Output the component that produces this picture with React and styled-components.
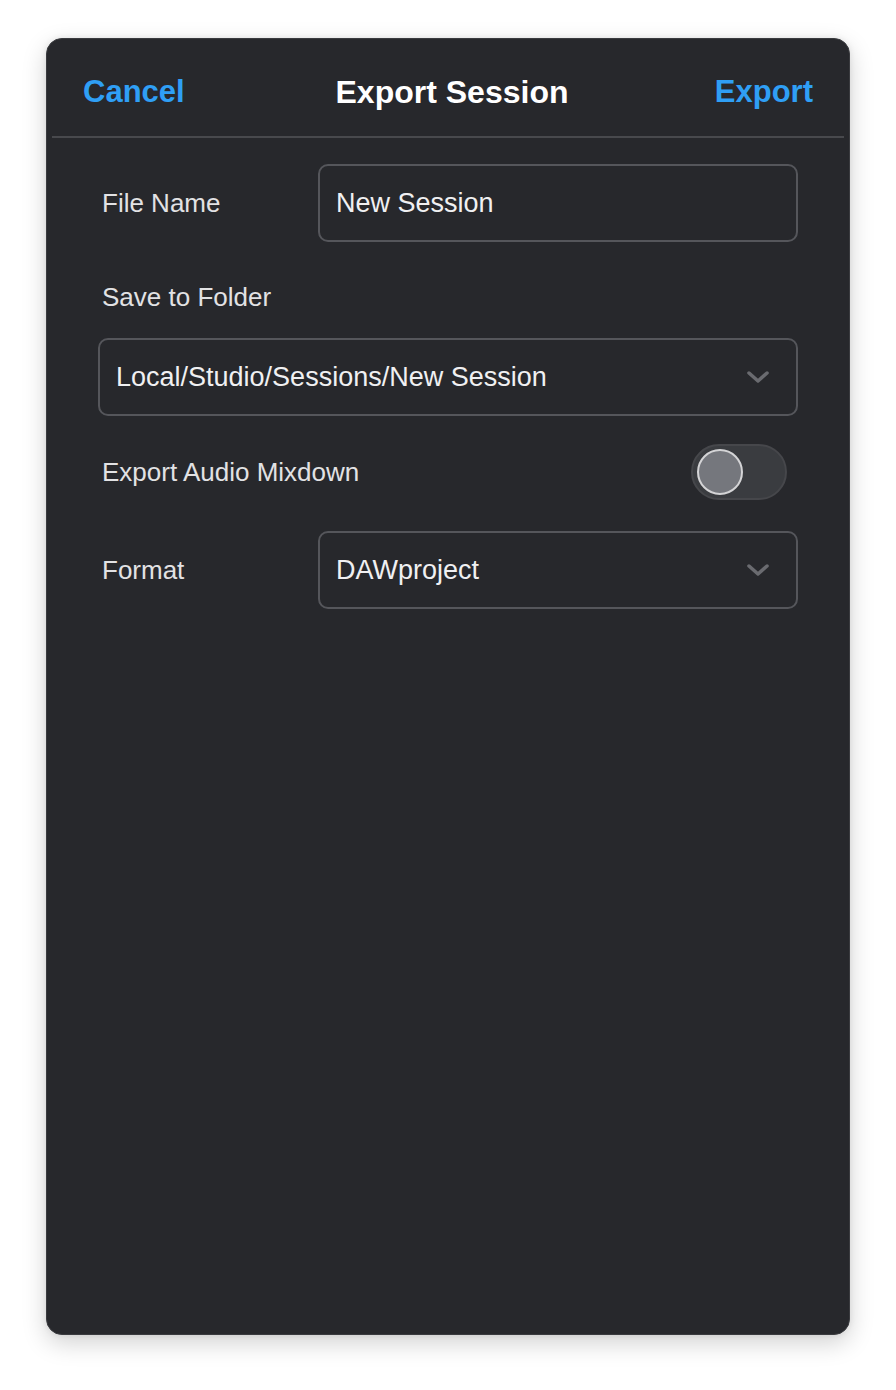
import React from 'react';
import styled, { createGlobalStyle } from 'styled-components';

const GlobalStyle = createGlobalStyle`
  body {
    margin: 0;
    background: #ffffff;
    font-family: "Liberation Sans", Arial, sans-serif;
  }
`;

const Page = styled.div`
  padding: 38px 46px 55px 46px;
`;

const Panel = styled.div`
  width: 804px;
  height: 1297px;
  box-sizing: border-box;
  background: #27282c;
  border: 1px solid #3a3b3f;
  border-radius: 16px;
  box-shadow: 0 8px 24px rgba(0, 0, 0, 0.18), 0 0 6px rgba(0, 0, 0, 0.08);
  display: flex;
  flex-direction: column;
`;

const Header = styled.div`
  height: 99px;
  box-sizing: border-box;
  display: grid;
  grid-template-columns: 1fr auto 1fr;
  align-items: center;
  padding: 9px 31px 0 31px;
  margin: 0 5px;
  border-bottom: 2px solid #48494d;
`;

const NavButton = styled.button`
  background: none;
  border: none;
  padding: 0;
  font-family: inherit;
  font-size: 31px;
  font-weight: 700;
  color: #2f9ff5;
  justify-self: ${(p) => (p.$right ? 'end' : 'start')};
  cursor: pointer;
`;

const Title = styled.h1`
  margin: 0 0 0 8px;
  font-size: 32px;
  font-weight: 700;
  color: #ffffff;
`;

const Form = styled.div`
  display: flex;
  flex-direction: column;
  padding: 26px 51px 0 51px;
`;

const Row = styled.div`
  display: grid;
  grid-template-columns: 220px 1fr;
  align-items: center;
  margin-bottom: ${(p) => p.$gap || 0}px;
`;

const Label = styled.div`
  padding-left: 4px;
  font-size: 26px;
  line-height: 30px;
  color: #e2e2e4;
  margin-bottom: ${(p) => p.$gap || 0}px;
`;

const Field = styled.div`
  height: 78px;
  box-sizing: border-box;
  border: 2px solid #55565b;
  border-radius: 10px;
  display: flex;
  align-items: center;
  justify-content: space-between;
  padding: 0 26px 0 16px;
  font-size: 27px;
  color: #f0f0f2;
  margin-bottom: ${(p) => p.$gap || 0}px;
`;

const ToggleRow = styled.div`
  display: flex;
  align-items: center;
  justify-content: space-between;
  height: 56px;
  margin: 28px 11px 31px 0;
`;

const Track = styled.div`
  width: 96px;
  height: 56px;
  box-sizing: border-box;
  border-radius: 28px;
  background: #3a3c40;
  border: 2px solid #46474b;
  display: flex;
  align-items: center;
  padding-left: 4px;
`;

const Knob = styled.div`
  width: 46px;
  height: 46px;
  box-sizing: border-box;
  border-radius: 50%;
  background: #75777d;
  border: 2px solid #d4d4d6;
`;

const Chevron = () => (
  <svg width="24" height="14" viewBox="0 0 24 14" fill="none">
    <path d="M3 3l9 8 9-8" stroke="#6a6b70" strokeWidth="3.5" strokeLinecap="round" strokeLinejoin="round" />
  </svg>
);

const App = () => (
  <>
    <GlobalStyle />
    <Page>
      <Panel>
        <Header>
          <NavButton>Cancel</NavButton>
          <Title>Export Session</Title>
          <NavButton $right>Export</NavButton>
        </Header>
        <Form>
          <Row $gap={40}>
            <Label>File Name</Label>
            <Field>New Session</Field>
          </Row>
          <Label $gap={26}>Save to Folder</Label>
          <Field>
            Local/Studio/Sessions/New Session
            <Chevron />
          </Field>
          <ToggleRow>
            <Label>Export Audio Mixdown</Label>
            <Track>
              <Knob />
            </Track>
          </ToggleRow>
          <Row>
            <Label>Format</Label>
            <Field>
              DAWproject
              <Chevron />
            </Field>
          </Row>
        </Form>
      </Panel>
    </Page>
  </>
);

export default App;
